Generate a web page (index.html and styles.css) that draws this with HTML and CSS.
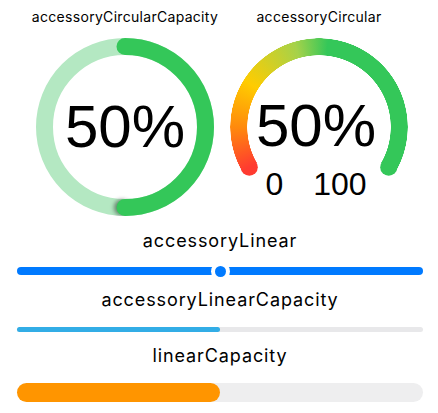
FILE: index.html
```html
<!DOCTYPE html>
<html>
<head>
<meta charset="utf-8">
<link rel="stylesheet" href="styles.css">
</head>
<body>
<div class="page">
  <div class="gauges">
    <div class="gauge-col">
      <div class="small-label">accessoryCircularCapacity</div>
      <div class="gauge">
        <svg class="gauge-svg" width="178" height="178" viewBox="0 0 178 178">
          <defs>
            <filter id="blur" x="-1" y="-1" width="3" height="3">
              <feGaussianBlur stdDeviation="2"/>
            </filter>
          </defs>
          <circle cx="89" cy="89" r="80.5" fill="none" stroke="#b4e8c2" stroke-width="17"/>
          <circle cx="86" cy="169.5" r="8" fill="rgba(0,0,0,0.45)" filter="url(#blur)"/>
          <path d="M89 8.5 A80.5 80.5 0 0 1 89 169.5" fill="none" stroke="#34c759" stroke-width="17" stroke-linecap="round"/>
        </svg>
        <div class="big-value">50%</div>
      </div>
    </div>
    <div class="gauge-col">
      <div class="small-label">accessoryCircular</div>
      <div class="gauge">
        <div class="arc"></div>
        <svg class="gauge-svg" width="178" height="178" viewBox="0 0 178 178">
          <circle cx="19.3" cy="129.25" r="8.5" fill="#ff3b30"/>
          <circle cx="158.7" cy="129.25" r="8.5" fill="#34c759"/>
          <circle cx="89" cy="8.5" r="14" fill="#fff"/>
          <circle cx="89" cy="8.5" r="8.5" fill="#34c759"/>
        </svg>
        <div class="inner">
          <div class="big-value">50%</div>
          <div class="range"><span>0</span><span>100</span></div>
        </div>
      </div>
    </div>
  </div>

  <div class="label">accessoryLinear</div>
  <div class="linear">
    <div class="linear-bar"></div>
    <div class="linear-dot"></div>
  </div>

  <div class="label">accessoryLinearCapacity</div>
  <div class="cap-track"><div class="cap-fill" style="width:50%"></div></div>

  <div class="label">linearCapacity</div>
  <div class="lc-track"><div class="lc-fill" style="width:50%"></div></div>
</div>
</body>
</html>
```

FILE: styles.css
```css
html, body {
  margin: 0;
  padding: 0;
  background: #fff;
}
body {
  font-family: Inter, "Liberation Sans", sans-serif;
  color: #000;
  width: 438px;
  height: 413px;
  overflow: hidden;
}
.page {
  display: flex;
  flex-direction: column;
  padding: 0 15px 0 17px;
}
.gauges {
  display: flex;
  gap: 16px;
  margin-left: 19px;
  padding-top: 7px;
}
.gauge-col {
  width: 178px;
  display: flex;
  flex-direction: column;
  align-items: center;
}
.small-label {
  font-size: 14px;
  line-height: 20px;
  height: 20px;
  letter-spacing: 0.3px;
  white-space: nowrap;
  margin-bottom: 11px;
}
.gauge {
  width: 178px;
  height: 178px;
  display: grid;
}
.gauge > * {
  grid-area: 1 / 1;
}
.gauge-svg {
  display: block;
}
.arc {
  width: 178px;
  height: 178px;
  border-radius: 50%;
  background: conic-gradient(from -120deg, #ff3b30 0deg, #ff8a0c 30deg, #ffcc00 62deg, #a5d24a 104deg, #34c759 126deg, #34c759 240deg, transparent 240deg);
  -webkit-mask: radial-gradient(circle at center, transparent 71.5px, #000 72px, #000 88.5px, transparent 89px);
  mask: radial-gradient(circle at center, transparent 71.5px, #000 72px, #000 88.5px, transparent 89px);
}
.big-value {
  font-family: "Liberation Sans", Arial, sans-serif;
  font-size: 60px;
  line-height: 60px;
  align-self: center;
  justify-self: center;
}
.inner {
  display: flex;
  flex-direction: column;
  align-items: center;
  padding-top: 58px;
}
.inner .big-value {
  margin-left: -6px;
}
.range {
  display: flex;
  gap: 30px;
  font-family: "Liberation Sans", Arial, sans-serif;
  font-size: 32px;
  line-height: 32px;
  margin-top: 12px;
  margin-left: -6px;
}
.label {
  text-align: center;
  font-size: 18px;
  line-height: 22px;
  letter-spacing: 0.9px;
  white-space: nowrap;
}
.gauges + .label {
  margin-top: 14px;
}
.linear {
  display: grid;
  height: 20px;
  margin-top: 9px;
  margin-bottom: 8px;
}
.linear > * {
  grid-area: 1 / 1;
  align-self: center;
}
.linear-bar {
  height: 8px;
  border-radius: 4px;
  background: #007aff;
}
.linear-dot {
  justify-self: center;
  width: 11px;
  height: 11px;
  border-radius: 50%;
  background: #007aff;
  box-shadow: 0 0 0 4px #fff;
}
.cap-track {
  margin-top: 16px;
  height: 5px;
  border-radius: 3px;
  background: #e8e8ea;
  display: flex;
}
.cap-fill {
  background: #32ade6;
  border-radius: 3px;
}
.cap-track + .label {
  margin-top: 13px;
}
.lc-track {
  margin-top: 16px;
  height: 19px;
  border-radius: 10px;
  background: #eeeeef;
  display: flex;
}
.lc-fill {
  background: #ff9500;
  border-radius: 10px;
}
```
